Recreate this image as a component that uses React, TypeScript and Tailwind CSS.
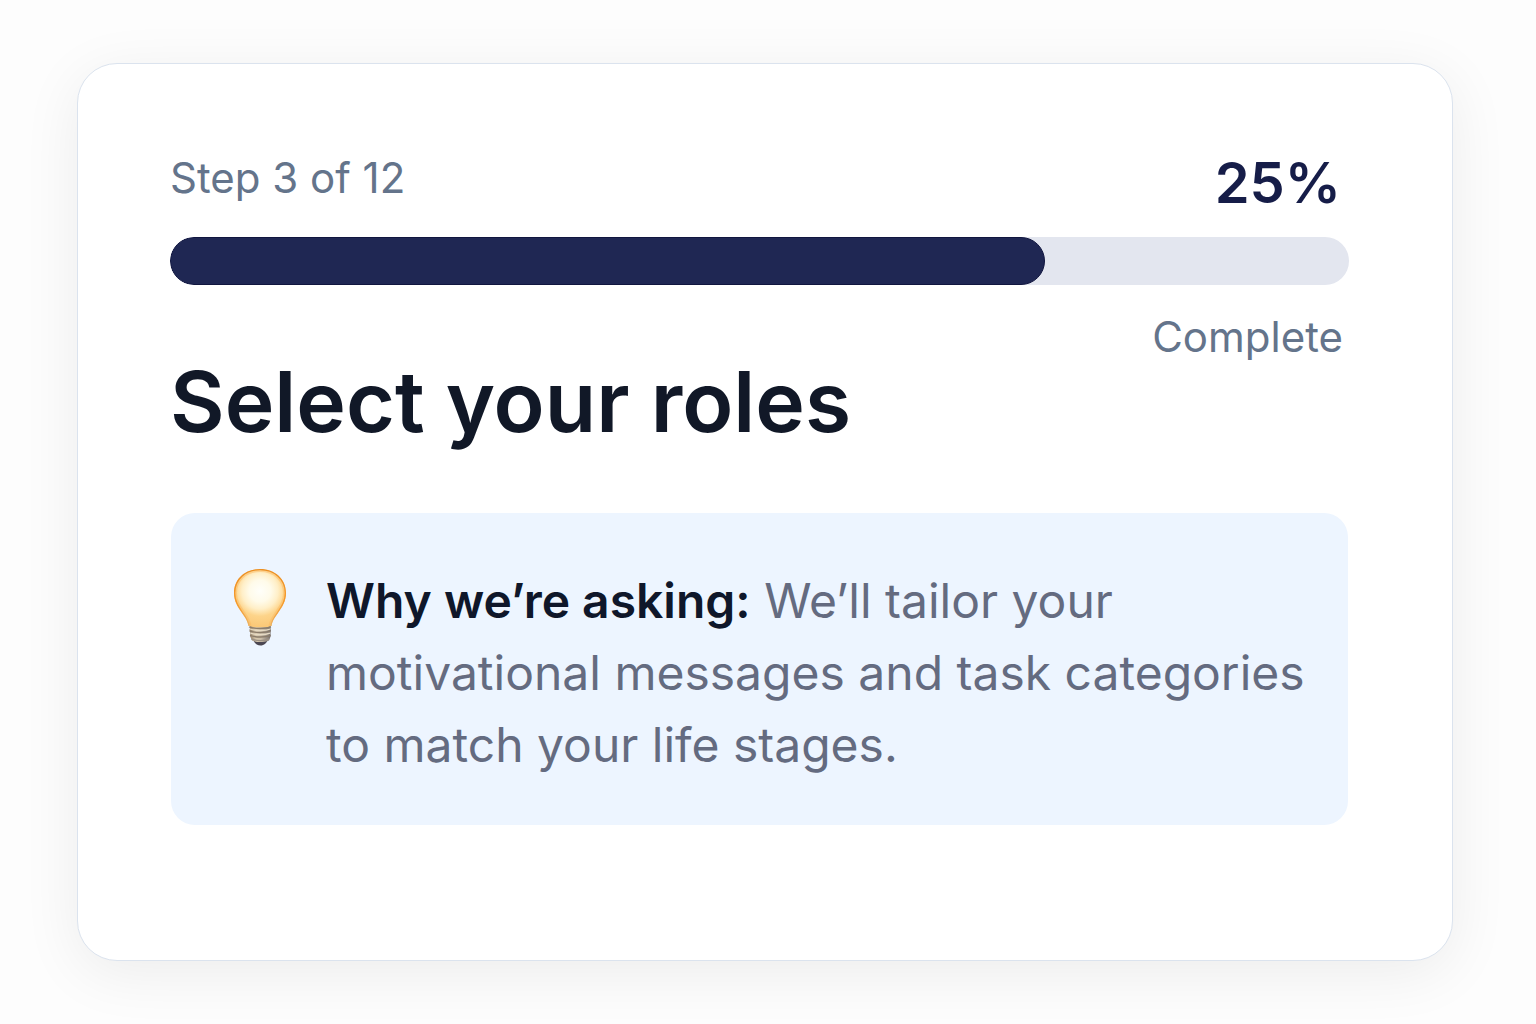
function LightBulb() {
  return (
    <svg viewBox="0 0 56 80" className="mt-0.5 h-20 w-14 shrink-0" role="img" aria-label="Light bulb">
      <defs>
        <radialGradient id="glass" gradientUnits="userSpaceOnUse" cx="28" cy="24" r="36">
          <stop offset="0" stopColor="#fffffa" />
          <stop offset="0.3" stopColor="#fffbea" />
          <stop offset="0.5" stopColor="#ffefc8" />
          <stop offset="0.7" stopColor="#fdd48a" />
          <stop offset="1" stopColor="#fbc877" />
        </radialGradient>
        <linearGradient id="rim" x1="0" y1="0" x2="0" y2="1">
          <stop offset="0" stopColor="#ea8f25" />
          <stop offset="0.6" stopColor="#f59a2c" />
          <stop offset="1" stopColor="#e9b265" />
        </linearGradient>
        <linearGradient id="screw" x1="0" y1="0" x2="1" y2="0">
          <stop offset="0" stopColor="#8f7b63" />
          <stop offset="0.3" stopColor="#d9c9ad" />
          <stop offset="0.55" stopColor="#c9bca8" />
          <stop offset="1" stopColor="#716a68" />
        </linearGradient>
        <clipPath id="glass-clip">
          <path d="M28 2C13 2 2 12 2 26c0 8 3.500 13.500 8 20 4 5.500 5.500 8 6.500 13 6 2 17 2 23 0 .8-5 2.500-7.500 6.500-13 4.500-6.500 8-12 8-20C54 12 43 2 28 2Z" />
        </clipPath>
      </defs>
      <path d="M21 72h15c-1 4-4 6.500-7.500 6.500S22 76 21 72Z" fill="#4a4651" />
      <path d="M17.500 57h21.500l-.5 4 .5 2-.5 3 .3 3-1.800 4.500c-5 2-12 2-17 0L18 69l.3-3-.8-3 .5-2Z" fill="url(#screw)" />
      <g clipPath="url(#glass-clip)">
        <path
          d="M28 2C13 2 2 12 2 26c0 8 3.500 13.500 8 20 4 5.500 5.500 8 6.500 13 6 2 17 2 23 0 .8-5 2.500-7.500 6.500-13 4.500-6.500 8-12 8-20C54 12 43 2 28 2Z"
          fill="url(#glass)"
        />
        <path
          d="M16.500 59c-1-5-2.500-7.500-6.500-13C5.500 39.500 2 34 2 26 2 12 13 2 28 2s26 10 26 24c0 8-3.500 13.500-8 20-4 5.500-5.700 8-6.500 13"
          fill="none"
          stroke="#fbb55a"
          strokeOpacity="0.45"
          strokeWidth="6"
        />
        <path
          d="M16.500 59c-1-5-2.500-7.500-6.500-13C5.500 39.500 2 34 2 26 2 12 13 2 28 2s26 10 26 24c0 8-3.500 13.500-8 20-4 5.500-5.700 8-6.500 13"
          fill="none"
          stroke="url(#rim)"
          strokeWidth="2.6"
        />
      </g>
      <path d="M17 60c6 2 16.500 2 22 0M17.500 64c6 2 15.500 2 21 0M18 68.500c6 2 15 2 20.500 0" fill="none" stroke="#8b7c6a" strokeWidth="1.3" />
      <path d="M18 62c6 2 15.500 2 20.500 0M18.500 66.200c6 2 14.500 2 19.500 0" fill="none" stroke="#e6dac3" strokeWidth="1.3" />
      <path d="M19.500 72c5 2 12.500 2 17.500 0" fill="none" stroke="#9c9184" strokeWidth="1.5" />
    </svg>
  );
}

export default function App() {
  return (
    <main className="flex min-h-screen flex-col bg-[#fdfdfd] pt-[63px] pr-[83px] pb-[63px] pl-[77px] font-['Inter',sans-serif]">
      <section className="grow rounded-[40px] border border-[#dbe3ee] bg-white pt-[86px] pr-[103px] pb-24 pl-[92px] shadow-[0_12px_60px_rgba(0,0,0,0.07)]">
        <div className="flex items-start justify-between">
          <p id="step" className="text-[42px] leading-14 text-[#64748b]">Step 3 of 12</p>
          <p className="pr-2 text-[56px] leading-[66px] font-semibold text-[#161d48]">25%</p>
        </div>
        <div
          role="progressbar"
          aria-labelledby="step"
          aria-valuenow={25}
          aria-valuemin={0}
          aria-valuemax={100}
          className="mt-[21px] h-12 overflow-hidden rounded-full bg-[#e3e6ef]"
        >
          <div className="h-full w-[74.2%] rounded-full border border-[#11163f] bg-[#1f2753]" />
        </div>
        <p className="mt-7 pr-1.5 text-right text-[42px] leading-12 text-[#64748b]">Complete</p>
        <h1 className="text-[84px] leading-[82px] font-semibold text-[#111827]">Select your roles</h1>
        <aside className="mx-px mt-[70px] flex items-start gap-[38px] rounded-3xl bg-[#edf5ff] pt-[52px] pr-8 pb-11 pl-[61px]">
          <LightBulb />
          <p className="text-[48px] leading-[72px] text-[#646b80]">
            <strong className="font-semibold text-[#0f172a]">Why we’re asking:</strong> We’ll tailor your
            motivational messages and task categories to match your life stages.
          </p>
        </aside>
      </section>
    </main>
  );
}
